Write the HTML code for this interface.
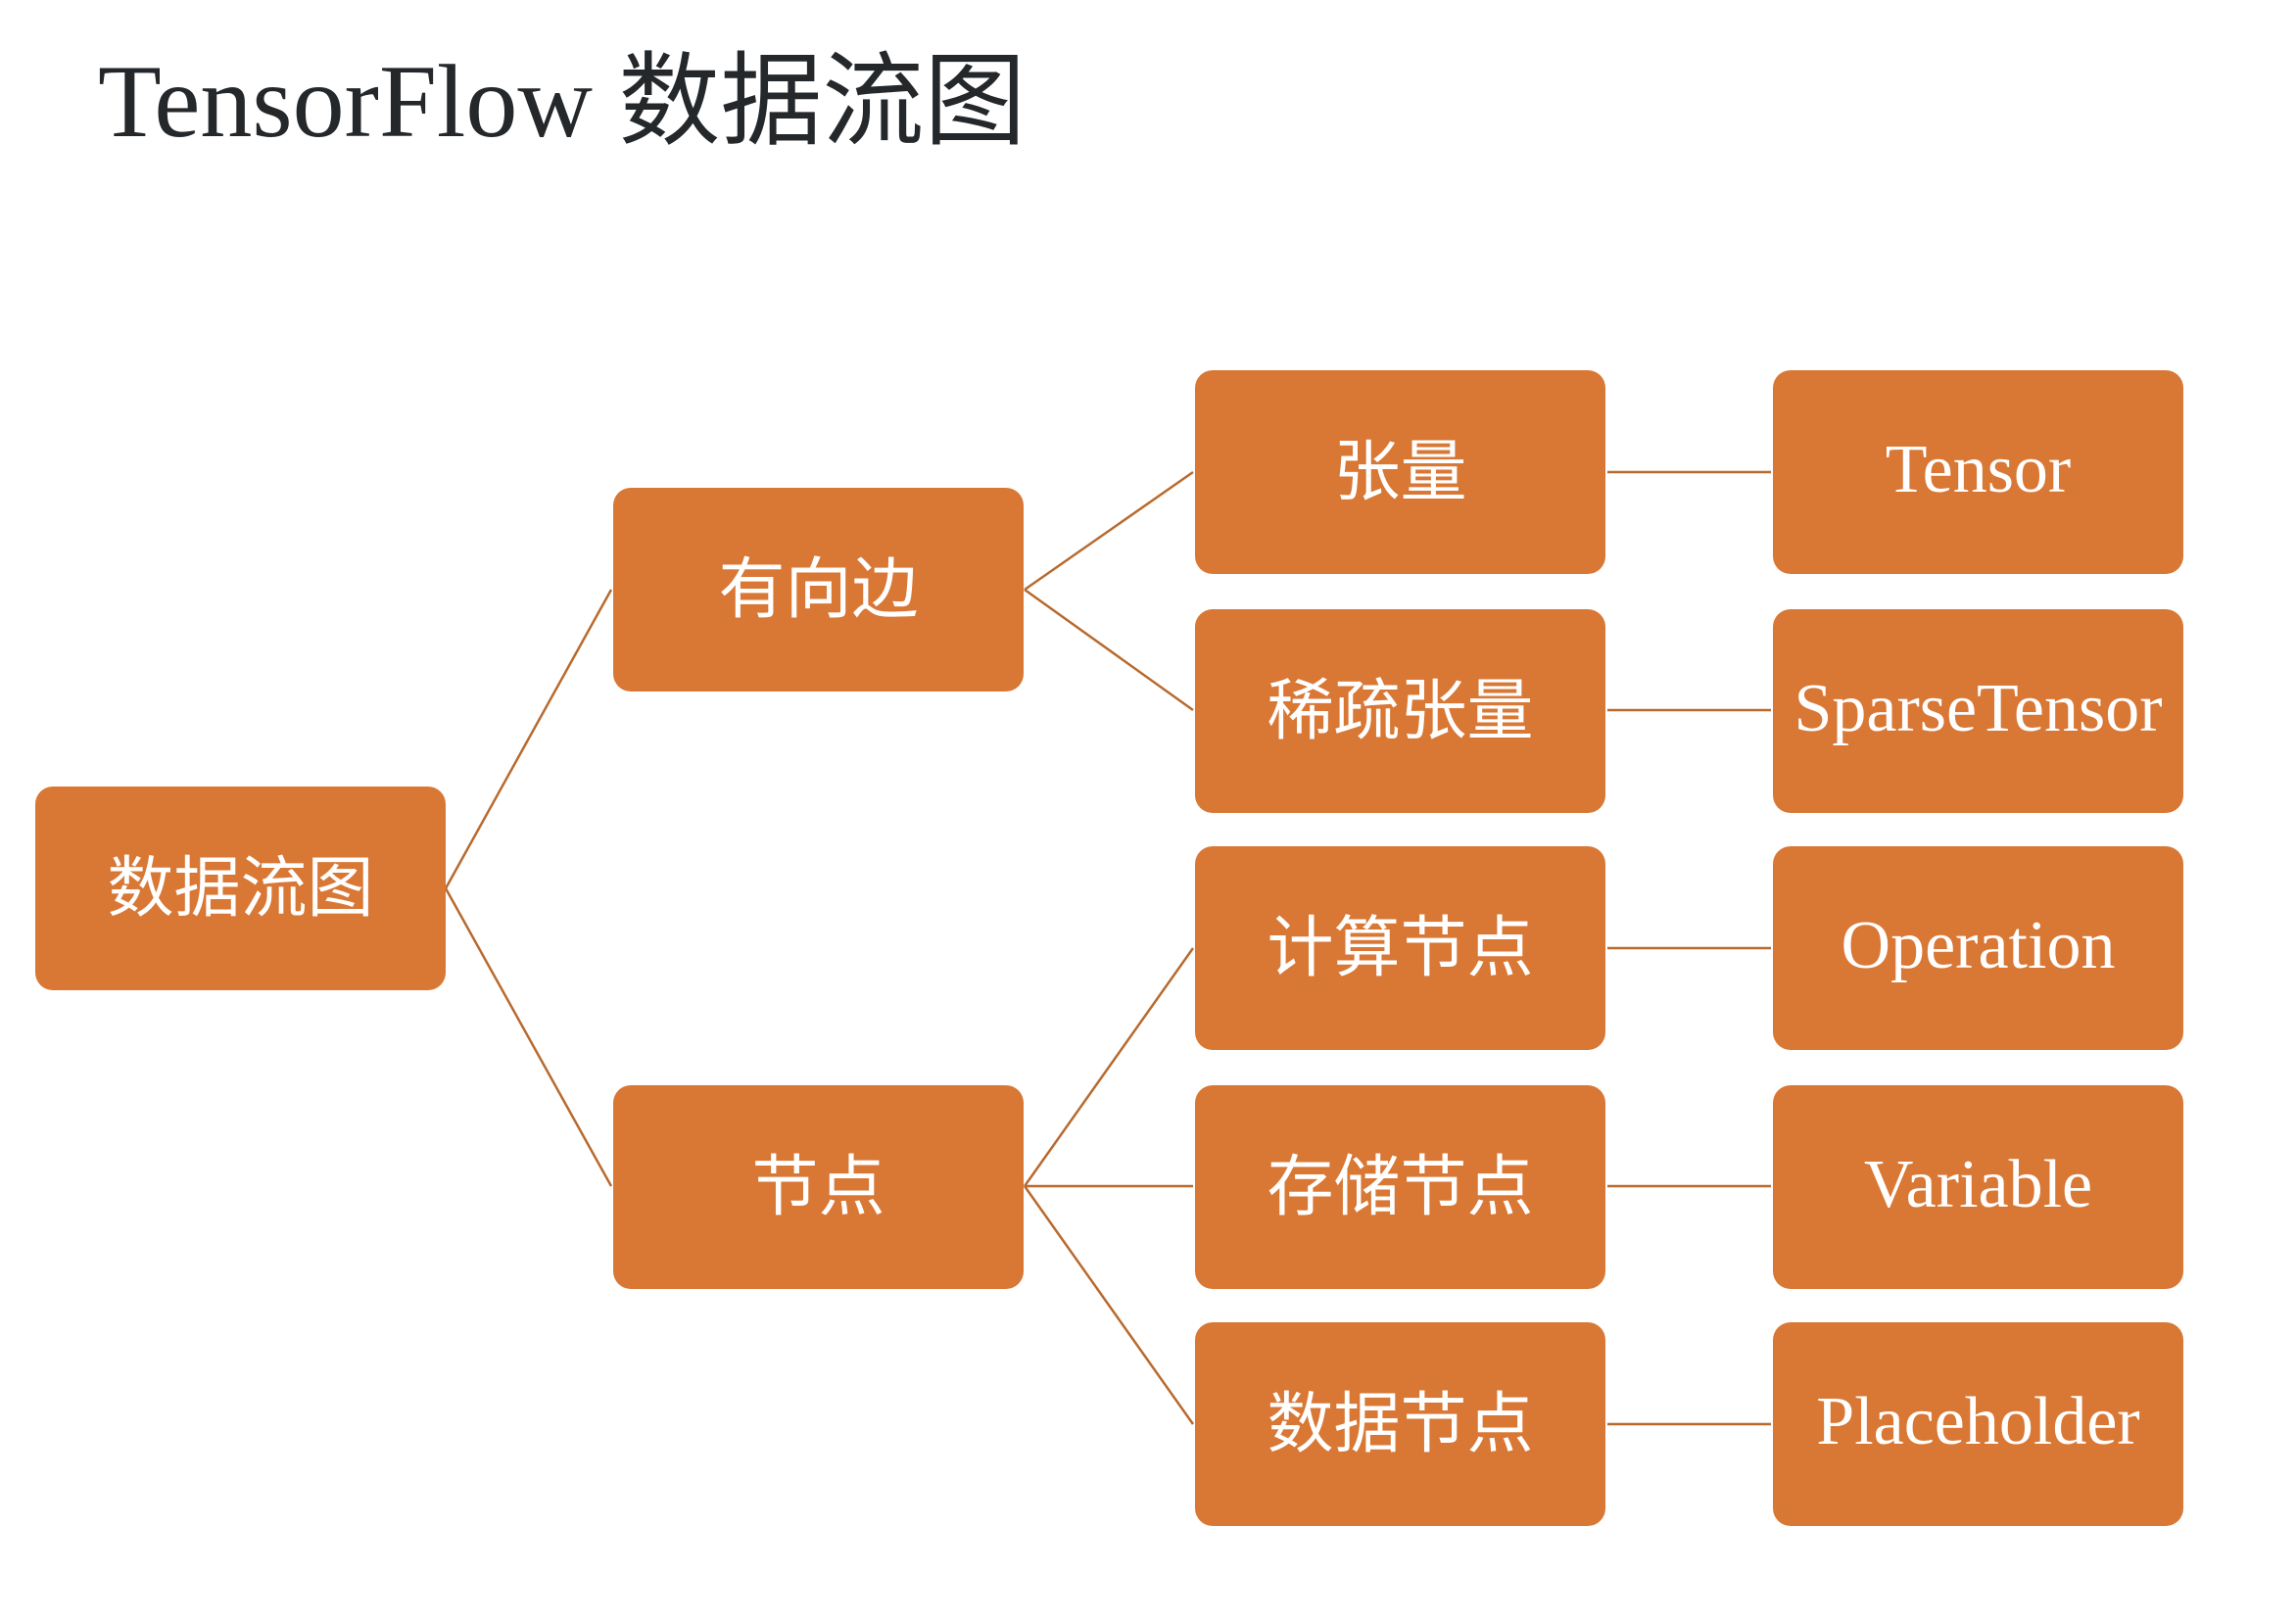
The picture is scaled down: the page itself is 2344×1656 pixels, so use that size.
<!DOCTYPE html>
<html><head><meta charset="utf-8"><style>
html,body{margin:0;padding:0;background:#fff;width:2344px;height:1656px;overflow:hidden;position:relative}
.t{position:absolute;left:100px;top:42px;font-size:106px;color:#25282b;white-space:nowrap;line-height:1}
.t .l{font-family:"Liberation Serif",serif}
.t .c{font-family:"Noto Sans CJK SC",sans-serif;font-size:104px;font-weight:400}
.b{position:absolute;width:419px;height:208px;background:#D97735;border-radius:18px;color:#fff;display:flex;align-items:center;justify-content:center;white-space:nowrap}
.z{font-family:"Noto Sans CJK SC",sans-serif;font-size:68px;padding-bottom:14px;box-sizing:border-box}
.e{font-family:"Liberation Serif",serif;font-size:70px;padding-bottom:4px;box-sizing:border-box}
svg{position:absolute;left:0;top:0}
</style></head><body>
<div class="t"><span class="l">TensorFlow </span><span class="c">数据流图</span></div>
<svg width="2344" height="1656"><g stroke="#B86A2E" stroke-width="2.5" fill="none">
<line x1="455" y1="907" x2="624" y2="602"/>
<line x1="455" y1="907" x2="624" y2="1211"/>
<line x1="1046" y1="602" x2="1218" y2="482"/>
<line x1="1046" y1="602" x2="1218" y2="725"/>
<line x1="1046" y1="1211" x2="1218" y2="968"/>
<line x1="1046" y1="1211" x2="1218" y2="1211"/>
<line x1="1046" y1="1211" x2="1218" y2="1454"/>
<line x1="1641" y1="482" x2="1808" y2="482"/>
<line x1="1641" y1="725" x2="1808" y2="725"/>
<line x1="1641" y1="968" x2="1808" y2="968"/>
<line x1="1641" y1="1211" x2="1808" y2="1211"/>
<line x1="1641" y1="1454" x2="1808" y2="1454"/>
</g></svg>
<div class="b z" style="left:36px;top:803px">数据流图</div>
<div class="b z" style="left:626px;top:498px">有向边</div>
<div class="b z" style="left:626px;top:1108px">节点</div>
<div class="b z" style="left:1220px;top:378px">张量</div>
<div class="b z" style="left:1220px;top:622px">稀疏张量</div>
<div class="b z" style="left:1220px;top:864px">计算节点</div>
<div class="b z" style="left:1220px;top:1108px">存储节点</div>
<div class="b z" style="left:1220px;top:1350px">数据节点</div>
<div class="b e" style="left:1810px;top:378px">Tensor</div>
<div class="b e" style="left:1810px;top:622px">SparseTensor</div>
<div class="b e" style="left:1810px;top:864px">Operation</div>
<div class="b e" style="left:1810px;top:1108px">Variable</div>
<div class="b e" style="left:1810px;top:1350px">Placeholder</div>
</body></html>
